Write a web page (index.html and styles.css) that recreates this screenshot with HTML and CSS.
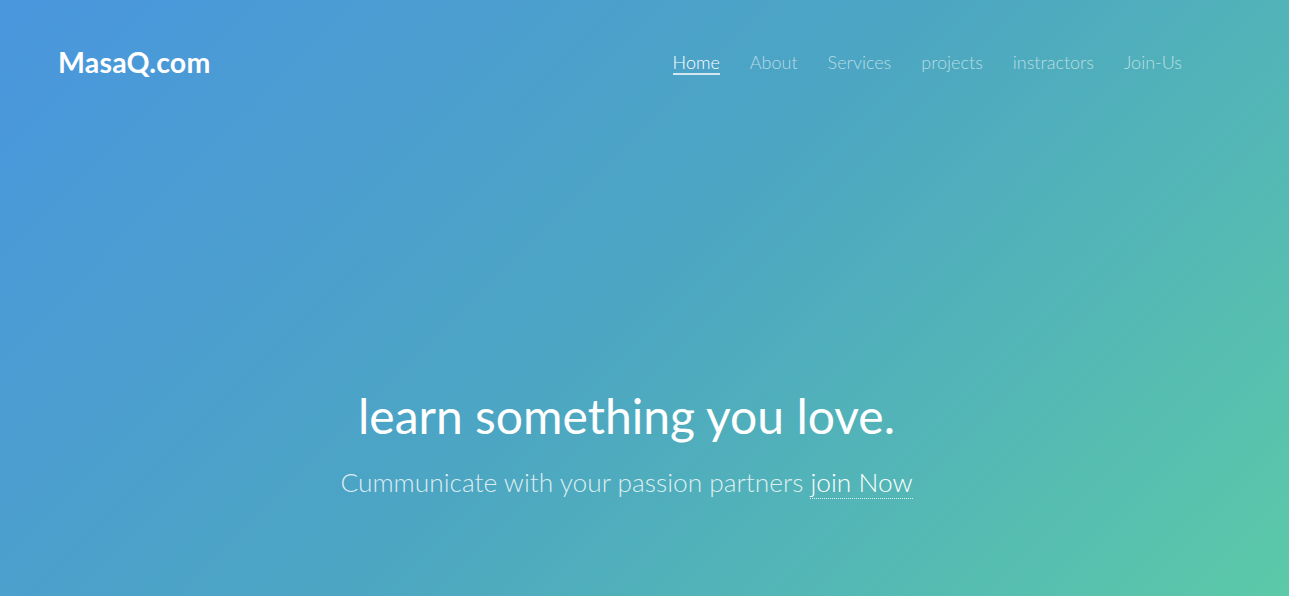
FILE: index.html
```html
<!DOCTYPE html>
<html lang="en">
<head>
<meta charset="utf-8">
<title>MasaQ.com</title>
<link rel="stylesheet" href="styles.css">
</head>
<body>
<div class="hero">
  <header class="topbar">
    <a class="logo" href="#">MasaQ.com</a>
    <nav class="nav">
      <a class="nav-link active" href="#">Home</a>
      <a class="nav-link" href="#">About</a>
      <a class="nav-link" href="#">Services</a>
      <a class="nav-link" href="#">projects</a>
      <a class="nav-link" href="#">instractors</a>
      <a class="nav-link" href="#">Join-Us</a>
    </nav>
  </header>
  <main class="intro">
    <h1 class="title">learn something you love.</h1>
    <p class="subtitle">Cummunicate with your passion partners <a class="join" href="#">join Now</a></p>
  </main>
</div>
</body>
</html>
```

FILE: styles.css
```css
html, body {
  margin: 0;
  padding: 0;
  height: 100%;
}
body {
  font-family: Lato, "Open Sans", sans-serif;
  color: #fff;
}
.hero {
  height: 596px;
  box-sizing: border-box;
  background: linear-gradient(135deg, #4a96de 0%, #4ca6c2 50%, #5cc9a8 100%);
  display: flex;
  flex-direction: column;
  padding: 0 107px 0 58px;
}
.topbar {
  display: flex;
  justify-content: space-between;
  align-items: center;
  height: 124px;
}
.logo {
  color: #fff;
  text-decoration: none;
  font-weight: 700;
  font-size: 28.5px;
  letter-spacing: 0.2px;
}
.nav {
  display: flex;
  gap: 30px;
  padding-top: 1px;
}
.nav-link {
  color: rgba(255, 255, 255, 0.6);
  text-decoration: none;
  font-size: 18px;
  font-weight: 300;
  padding-bottom: 0;
  border-bottom: 2px solid transparent;
}
.nav-link.active {
  color: #fff;
  border-bottom-color: rgba(255, 255, 255, 0.75);
}
.intro {
  flex: 1;
  display: flex;
  flex-direction: column;
  align-items: center;
  padding-top: 263px;
  padding-left: 13px;
}
.title {
  margin: 0;
  font-size: 48px;
  font-weight: 400;
  line-height: 1.2;
}
.subtitle {
  margin: 21px 0 0;
  font-size: 26.3px;
  font-weight: 300;
  color: rgba(255, 255, 255, 0.82);
}
.join {
  color: #fff;
  text-decoration: none;
  border-bottom: 1px dotted rgba(255, 255, 255, 0.8);
}
```
